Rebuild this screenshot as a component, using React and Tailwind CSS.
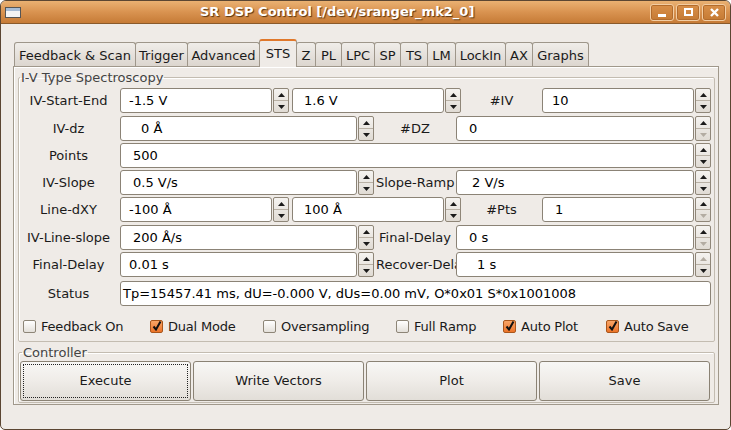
import React from "react";

const font = "font-['DejaVu_Sans','Liberation_Sans',sans-serif]";

const tabs = [
  ["Feedback & Scan", "w-[122px]"],
  ["Trigger", "w-[53px]"],
  ["Advanced", "w-[73px]"],
  ["STS", "w-[38px]"],
  ["Z", "w-[20px]"],
  ["PL", "w-[27px]"],
  ["LPC", "w-[34px]"],
  ["SP", "w-[27px]"],
  ["TS", "w-[28px]"],
  ["LM", "w-[29px]"],
  ["LockIn", "w-[51px]"],
  ["AX", "w-[28px]"],
  ["Graphs", "w-[57px]"],
];

function Arrow({ up, off }) {
  return (
    <svg width="7" height="4" viewBox="0 0 7 4">
      <polygon
        points={up ? "0,4 7,4 3.5,0" : "0,0 7,0 3.5,4"}
        fill={off ? "#b3aca2" : "#1a1a1a"}
      />
    </svg>
  );
}

function Spin({ up = true, down = true }) {
  return (
    <div className="ml-[1px] flex h-[25px] w-[16px] flex-col overflow-hidden rounded-[2px] border border-[#8f8678] bg-linear-to-b from-[#f5f3f0] to-[#e0dbd4]">
      <div className="flex flex-1 items-center justify-center border-b border-[#b8b0a4]">
        <Arrow up off={!up} />
      </div>
      <div className="flex flex-1 items-center justify-center">
        <Arrow off={!down} />
      </div>
    </div>
  );
}

function Entry({ w, pl, value }) {
  return (
    <div
      className={`flex h-[25px] items-center overflow-hidden whitespace-nowrap rounded-[3px] border border-[#8b8376] bg-white text-black ${w} ${pl}`}
    >
      {value}
    </div>
  );
}

function Label({ w, text }) {
  return (
    <div className={`overflow-hidden whitespace-nowrap px-[2px] text-center ${w}`}>
      {text}
    </div>
  );
}

function Check({ on, label, w }) {
  return (
    <div className={`flex items-center ${w}`}>
      <div
        className={`flex h-[13px] w-[13px] items-center justify-center rounded-[2px] border ${
          on
            ? "border-[#a9561c] bg-linear-to-b from-[#f8a566] to-[#ec7427]"
            : "border-[#8d8577] bg-linear-to-b from-white to-[#e4e0da]"
        }`}
      >
        {on && (
          <svg width="10" height="10" viewBox="0 0 10 10" className="-mt-[2px] ml-[1px]">
            <path d="M1.5 5.5 L4 8.5 L8.5 0.5" stroke="#111" strokeWidth="2" fill="none" />
          </svg>
        )}
      </div>
      <span className="ml-[5px] tracking-[-0.2px]">{label}</span>
    </div>
  );
}

function Button({ label, focus }) {
  return (
    <div className="flex h-[40px] w-[171px] rounded-[3px] border border-[#8a8274] bg-linear-to-b from-[#f8f7f5] via-[#efece8] to-[#e2ded8] p-[2px]">
      <div
        className={`flex flex-1 items-center justify-center ${
          focus ? "border border-dotted border-[#222]" : ""
        }`}
      >
        {label}
      </div>
    </div>
  );
}

function WinBtn({ children }) {
  return (
    <div className="flex h-[17px] w-[24px] items-center justify-center rounded-[3px] border border-[#f2cda3] bg-linear-to-b from-[#d99049] to-[#c57a33] shadow-[inset_0_0_0_1px_#b36c2c]">
      {children}
    </div>
  );
}

function TitleBar() {
  return (
    <div className="flex h-[23px] items-center border-b border-[#8a5a2b] bg-linear-to-b from-[#eab172] via-[#d99350] to-[#c67b36] pl-[4px] pr-[4px]">
      <svg width="16" height="11" viewBox="0 0 16 11">
        <rect x="0.5" y="0.5" width="15" height="10" fill="#f4f4f4" stroke="#555" />
        <rect x="1" y="1" width="14" height="3" fill="#a8bcd4" />
      </svg>
      <div className="ml-[179px] font-bold text-white [text-shadow:1px_1px_1px_#5a3410]">
        SR DSP Control [/dev/sranger_mk2_0]
      </div>
      <div className="flex-1" />
      <div className="flex gap-[2px]">
        <WinBtn>
          <div className="mt-[7px] h-[3px] w-[8px] bg-white" />
        </WinBtn>
        <WinBtn>
          <div className="h-[8px] w-[9px] border-2 border-white" />
        </WinBtn>
        <WinBtn>
          <svg width="9" height="9" viewBox="0 0 9 9">
            <path d="M1 1 L8 8 M8 1 L1 8" stroke="white" strokeWidth="2.4" />
          </svg>
        </WinBtn>
      </div>
    </div>
  );
}

function Tabs() {
  return (
    <div className="flex h-[27px] items-end pl-[1px]">
      {tabs.map(([t, w], i) =>
        t === "STS" ? (
          <div
            key={t}
            className={`relative z-10 -mb-[1px] -ml-[1px] flex h-[28px] justify-center rounded-t-[3px] border-x border-t-2 border-x-[#9e968a] border-t-[#e0782b] bg-[#efebe7] pt-[3px] ${w}`}
          >
            {t}
          </div>
        ) : (
          <div
            key={t}
            className={`flex h-[24px] items-center justify-center rounded-t-[3px] border-x border-t border-[#9e968a] bg-linear-to-b from-[#f0ede9] to-[#dcd6cf] pt-[2px] ${w} ${
              i === 0 ? "" : "-ml-[1px]"
            }`}
          >
            {t}
          </div>
        )
      )}
    </div>
  );
}

function Row3({ label, a, b, mid, c, spinC, mt }) {
  return (
    <div className={`flex h-[25px] items-center ${mt}`}>
      <Label w="w-[99px]" text={label} />
      <div className="ml-[2px]" />
      <Entry w="w-[152px]" pl={a[1]} value={a[0]} />
      <Spin />
      <div className="ml-[3px]" />
      <Entry w="w-[152px]" pl={b[1]} value={b[0]} />
      <Spin />
      <Label w="w-[81px]" text={mid} />
      <Entry w="w-[152px]" pl={c[1]} value={c[0]} />
      <Spin {...spinC} />
    </div>
  );
}

function Row2({ label, a, mid, c, spinC, mt }) {
  return (
    <div className={`flex h-[25px] items-center ${mt}`}>
      <Label w="w-[99px]" text={label} />
      <div className="ml-[2px]" />
      <Entry w="w-[237px]" pl={a[1]} value={a[0]} />
      <Spin />
      <Label w="w-[82px]" text={mid} />
      <Entry w="w-[238px]" pl={c[1]} value={c[0]} />
      <Spin {...spinC} />
    </div>
  );
}

export default function App() {
  return (
    <div className={`${font} h-[430px] w-[731px] bg-white text-[13px] text-[#1a1a1a]`}>
      <div className="flex h-[430px] w-[731px] flex-col overflow-hidden rounded-t-[6px] rounded-b-[5px] border border-[#5b4632] bg-[#efebe7]">
        <TitleBar />
        <div className="flex-1 pl-[12px] pt-[15px]">
          <Tabs />
          <div className="h-[339px] w-[706px] border border-[#a0988b] pl-[4px] pt-[3px] shadow-[inset_1px_1px_0_#fff]">
            <fieldset className="w-[697px] rounded-[2px] border border-[#c3bcb1] pb-[7px] shadow-[inset_1px_1px_0_#fff]">
              <legend className="ml-[1px] px-[1px] leading-[15px] text-[#444]">I-V Type Spectroscopy</legend>
              <Row3
                mt="mt-[3px]"
                label="IV-Start-End"
                a={["-1.5 V", "pl-[8px]"]}
                b={["1.6 V", "pl-[11px]"]}
                mid="#IV"
                c={["10", "pl-[9px]"]}
              />
              <Row2
                mt="mt-[3px]"
                label="IV-dz"
                a={["0 Å", "pl-[20px]"]}
                mid="#DZ"
                c={["0", "pl-[12px]"]}
                spinC={{ down: false }}
              />
              <div className="mt-[2px] flex h-[25px] items-center">
                <Label w="w-[99px]" text="Points" />
                <div className="ml-[2px]" />
                <Entry w="w-[574px]" pl="pl-[12px]" value="500" />
                <Spin />
              </div>
              <Row2
                mt="mt-[2px]"
                label="IV-Slope"
                a={["0.5 V/s", "pl-[12px]"]}
                mid="Slope-Ramp"
                c={["2 V/s", "pl-[15px]"]}
              />
              <Row3
                mt="mt-[2px]"
                label="Line-dXY"
                a={["-100 Å", "pl-[8px]"]}
                b={["100 Å", "pl-[11px]"]}
                mid="#Pts"
                c={["1", "pl-[12px]"]}
                spinC={{ down: false }}
              />
              <Row2
                mt="mt-[3px]"
                label="IV-Line-slope"
                a={["200 Å/s", "pl-[12px]"]}
                mid="Final-Delay"
                c={["0 s", "pl-[12px]"]}
                spinC={{ down: false }}
              />
              <Row2
                mt="mt-[2px]"
                label="Final-Delay"
                a={["0.01 s", "pl-[8px]"]}
                mid="Recover-Delay"
                c={["1 s", "pl-[20px]"]}
                spinC={{ up: false }}
              />
              <div className="mt-[4px] flex h-[25px] items-center">
                <Label w="w-[99px]" text="Status" />
                <div className="ml-[2px]" />
                <Entry
                  w="w-[591px]"
                  pl="pl-[2px]"
                  value="Tp=15457.41 ms, dU=-0.000 V, dUs=0.00 mV, O*0x01 S*0x1001008"
                />
              </div>
              <div className="mt-[13px] flex h-[15px] items-center pl-[4px]">
                <Check w="w-[127px]" label="Feedback On" />
                <Check w="w-[113px]" label="Dual Mode" on />
                <Check w="w-[133px]" label="Oversampling" />
                <Check w="w-[107px]" label="Full Ramp" />
                <Check w="w-[103px]" label="Auto Plot" on />
                <Check label="Auto Save" on />
              </div>
            </fieldset>
            <fieldset className="mt-[3px] w-[697px] rounded-[2px] border border-[#c3bcb1] pb-[1px] pl-[1px] shadow-[inset_1px_1px_0_#fff]">
              <legend className="ml-[2px] px-[1px] leading-[15px] text-[#444]">Controller</legend>
              <div className="mt-[1px] flex gap-[2px]">
                <Button label="Execute" focus />
                <Button label="Write Vectors" />
                <Button label="Plot" />
                <Button label="Save" />
              </div>
            </fieldset>
          </div>
        </div>
      </div>
    </div>
  );
}
